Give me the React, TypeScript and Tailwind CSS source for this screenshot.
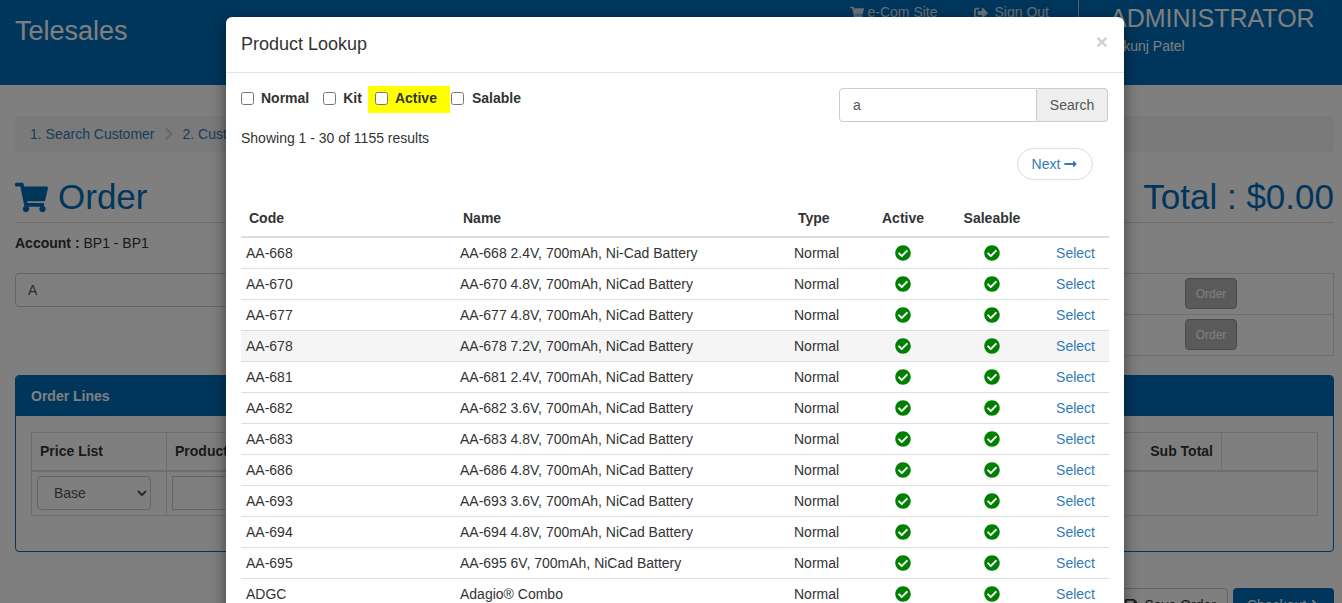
import { FaCheckCircle, FaChevronRight, FaLongArrowAltRight, FaSave, FaShoppingCart, FaSignOutAlt } from "react-icons/fa";

const rows = [
  ["AA-668", "AA-668 2.4V, 700mAh, Ni-Cad Battery"],
  ["AA-670", "AA-670 4.8V, 700mAh, NiCad Battery"],
  ["AA-677", "AA-677 4.8V, 700mAh, NiCad Battery"],
  ["AA-678", "AA-678 7.2V, 700mAh, NiCad Battery"],
  ["AA-681", "AA-681 2.4V, 700mAh, NiCad Battery"],
  ["AA-682", "AA-682 3.6V, 700mAh, NiCad Battery"],
  ["AA-683", "AA-683 4.8V, 700mAh, NiCad Battery"],
  ["AA-686", "AA-686 4.8V, 700mAh, NiCad Battery"],
  ["AA-693", "AA-693 3.6V, 700mAh, NiCad Battery"],
  ["AA-694", "AA-694 4.8V, 700mAh, NiCad Battery"],
  ["AA-695", "AA-695 6V, 700mAh, NiCad Battery"],
  ["ADGC", "Adagio® Combo"],
];

const Header = () => {
  return (
    <header className="flex h-[85px] bg-[#006cb8] text-white">
      <div className="pl-[15px] pt-[14px] text-[27px] leading-[34px]">Telesales</div>
      <div className="ml-auto flex">
        <div className="flex items-start gap-[36px] pr-[29px] pt-[4px] text-[14px] leading-[17px] text-white/80">
          <span className="flex items-center gap-[3px]">
            <FaShoppingCart className="h-[14px] w-[14px]" />
            e-Com Site
          </span>
          <span className="flex items-center gap-[7px]">
            <FaSignOutAlt className="h-[14px] w-[14px]" />
            Sign Out
          </span>
        </div>
        <div className="h-[17px] w-[1px] bg-[#9cc4e0]" />
        <div className="w-[263px] pl-[31px] pt-[3px]">
          <div className="text-[25px] leading-[30px]">ADMINISTRATOR</div>
          <div className="mt-[5px] text-[14px] leading-[17px]">Nikunj Patel</div>
        </div>
      </div>
    </header>
  );
};

const OrderLines = () => {
  return (
    <section className="mt-[19px] h-[177px] rounded-[4px] border border-[#006cb8]">
      <div className="flex h-[40px] items-center rounded-t-[3px] bg-[#006cb8] px-[15px] text-[14px] font-bold text-white">
        Order Lines
      </div>
      <table className="mx-[15px] mt-[16px] w-[1287px] table-fixed border-collapse border border-[#ddd] text-[14px] text-[#333]">
        <colgroup>
          <col className="w-[135px]" />
          <col />
          <col className="w-[96px]" />
        </colgroup>
        <thead>
          <tr className="h-[38px] border-b-2 border-[#ddd]">
            <th className="border border-[#ddd] px-[8px] text-left">Price List</th>
            <th className="border border-[#ddd] px-[8px] text-right">
              <div className="flex justify-between">
                <span>Product</span>
                <span>Sub Total</span>
              </div>
            </th>
            <th className="border border-[#ddd]" />
          </tr>
        </thead>
        <tbody>
          <tr className="h-[45px]">
            <td className="border-r border-[#ddd] px-[5px]">
              <select className="h-[34px] w-[114px] rounded-[4px] border border-[#ccc] bg-white pl-[12px] text-[14px] text-[#555]" defaultValue="Base">
                <option>Base</option>
              </select>
            </td>
            <td className="px-[5px]">
              <div className="h-[34px] w-[200px] border border-[#ccc] bg-white" />
            </td>
            <td />
          </tr>
        </tbody>
      </table>
    </section>
  );
};

const Background = () => {
  return (
    <div className="h-[603px] overflow-hidden bg-white">
      <Header />
      <main className="px-[15px] pt-[31px] pr-[8px]">
        <nav className="flex h-[36px] items-center gap-[9px] rounded-[4px] bg-[#f5f5f5] px-[15px] text-[14px] text-[#337ab7]">
          1. Search Customer
          <FaChevronRight className="h-[14px] w-[10px] text-[#ccc]" />
          2. Customer
        </nav>
        <div className="mt-[25px] flex h-[46px] items-center justify-between border-b border-[#ddd] pb-[5px] text-[#006cb8]">
          <h1 className="flex items-center gap-[10px] text-[35px] leading-[38px]">
            <FaShoppingCart className="h-[33px] w-[33px]" />
            Order
          </h1>
          <div className="text-[35px] leading-[38px]">Total : $0.00</div>
        </div>
        <p className="mt-[12px] text-[14px] leading-[17px] text-[#333]">
          <b>Account : </b>BP1 - BP1
        </p>
        <div className="mt-[21px] flex h-[83px]">
          <div className="h-[34px] w-[600px] rounded-[4px] border border-[#ccc] bg-white pl-[12px] text-[14px] leading-[32px] text-[#555]">A</div>
          <div className="ml-auto flex h-[83px] w-[300px] flex-col border border-[#ddd]">
            <div className="flex h-[41px] items-center justify-end border-b border-[#ddd] pr-[96px]">
              <button className="h-[31px] w-[52px] rounded-[4px] border border-[#949494] bg-[#b4b4b4] text-[12px] text-white">Order</button>
            </div>
            <div className="flex h-[41px] items-center justify-end pr-[96px]">
              <button className="h-[31px] w-[52px] rounded-[4px] border border-[#949494] bg-[#b4b4b4] text-[12px] text-white">Order</button>
            </div>
          </div>
        </div>
        <OrderLines />
        <div className="mt-[36px] flex justify-end gap-[5px] text-[14px]">
          <button className="flex h-[34px] w-[120px] items-center justify-end gap-[6px] rounded-[4px] border border-[#ccc] bg-white pr-[11px] text-[#333]">
            <FaSave className="h-[14px] w-[14px]" />
            Save Order
          </button>
          <button className="flex h-[34px] w-[101px] items-center justify-center gap-[4px] rounded-[4px] bg-[#006cb8] text-white">
            Checkout
            <FaChevronRight className="h-[12px] w-[10px]" />
          </button>
        </div>
      </main>
    </div>
  );
};

const Check = () => {
  return <FaCheckCircle className="mx-auto h-[16px] w-[16px] text-[#008000]" />;
};

const ProductTable = () => {
  return (
    <table className="w-[868px] table-fixed border-collapse text-[14px] text-[#333]">
      <colgroup>
        <col className="w-[214px]" />
        <col className="w-[334px]" />
        <col className="w-[72px]" />
        <col className="w-[84px]" />
        <col className="w-[94px]" />
        <col className="w-[70px]" />
      </colgroup>
      <thead>
        <tr className="h-[36px] border-b-2 border-[#ddd]">
          <th className="pl-[8px] text-left">Code</th>
          <th className="pl-[8px] text-left">Name</th>
          <th className="pl-[9px] text-left">Type</th>
          <th className="text-center">Active</th>
          <th className="text-center">Saleable</th>
          <th />
        </tr>
      </thead>
      <tbody>
        {rows.map((row) => (
          <tr key={row[0]} className={`h-[31px] border-b border-[#ddd] ${row[0] === "AA-678" ? "bg-[#f5f5f5]" : ""}`}>
            <td className="pl-[5px] pt-[1px]">{row[0]}</td>
            <td className="pl-[5px] pt-[1px]">{row[1]}</td>
            <td className="pl-[5px] pt-[1px]">Normal</td>
            <td>
              <Check />
            </td>
            <td>
              <Check />
            </td>
            <td className="pr-[14px] pt-[1px] text-right text-[#337ab7]">Select</td>
          </tr>
        ))}
      </tbody>
    </table>
  );
};

const ProductLookup = () => {
  return (
    <div className="ml-[226px] mt-[17px] h-[640px] w-[898px] rounded-t-[6px] bg-white shadow-[0_5px_15px_rgba(0,0,0,0.5)]">
      <div className="flex h-[56px] items-center justify-between border-b border-[#e5e5e5] pl-[15px] pr-[16px]">
        <h4 className="text-[18px] text-[#333]">Product Lookup</h4>
        <span className="mb-[6px] text-[21px] font-bold leading-none text-black/20">×</span>
      </div>
      <div className="pl-[15px] pr-[15px]">
        <div className="flex items-start justify-between">
          <div>
            <div className="mt-[13px] flex h-[27px] items-start text-[14px] font-bold text-[#333]">
              <label className="flex h-[25px] items-center gap-[7px]">
                <input type="checkbox" className="m-0" />
                Normal
              </label>
              <label className="ml-[14px] flex h-[25px] items-center gap-[7px]">
                <input type="checkbox" className="m-0" />
                Kit
              </label>
              <label className="ml-[6px] flex h-[27px] w-[82px] items-center gap-[7px] bg-[#ffff00] pb-[2px] pl-[7px]">
                <input type="checkbox" className="m-0" />
                Active
              </label>
              <label className="ml-[1px] flex h-[25px] items-center gap-[8px]">
                <input type="checkbox" className="m-0" />
                Salable
              </label>
            </div>
            <p className="mt-[17px] text-[14px] leading-[17px] text-[#333]">Showing 1 - 30 of 1155 results</p>
          </div>
          <div className="mr-[1px] mt-[15px] flex h-[34px] w-[269px] text-[14px]">
            <div className="flex-1 rounded-l-[4px] border border-[#ccc] pl-[13px] leading-[32px] text-[#555]">a</div>
            <div className="flex w-[71px] items-center justify-center rounded-r-[4px] border border-l-0 border-[#ccc] bg-[#eee] text-[#555]">Search</div>
          </div>
        </div>
        <div className="mt-[1px] flex justify-end pr-[16px]">
          <button className="flex h-[32px] w-[76px] items-center justify-center gap-[3px] rounded-full border border-[#ddd] bg-white text-[14px] text-[#337ab7]">
            Next
            <FaLongArrowAltRight className="h-[14px] w-[15px]" />
          </button>
        </div>
        <div className="mt-[21px]">
          <ProductTable />
        </div>
      </div>
    </div>
  );
};

export default function App() {
  return (
    <div className="relative h-[603px] overflow-hidden font-['Liberation_Sans',Arial,sans-serif]">
      <Background />
      <div className="absolute inset-0 overflow-hidden bg-black/50">
        <ProductLookup />
      </div>
    </div>
  );
}
